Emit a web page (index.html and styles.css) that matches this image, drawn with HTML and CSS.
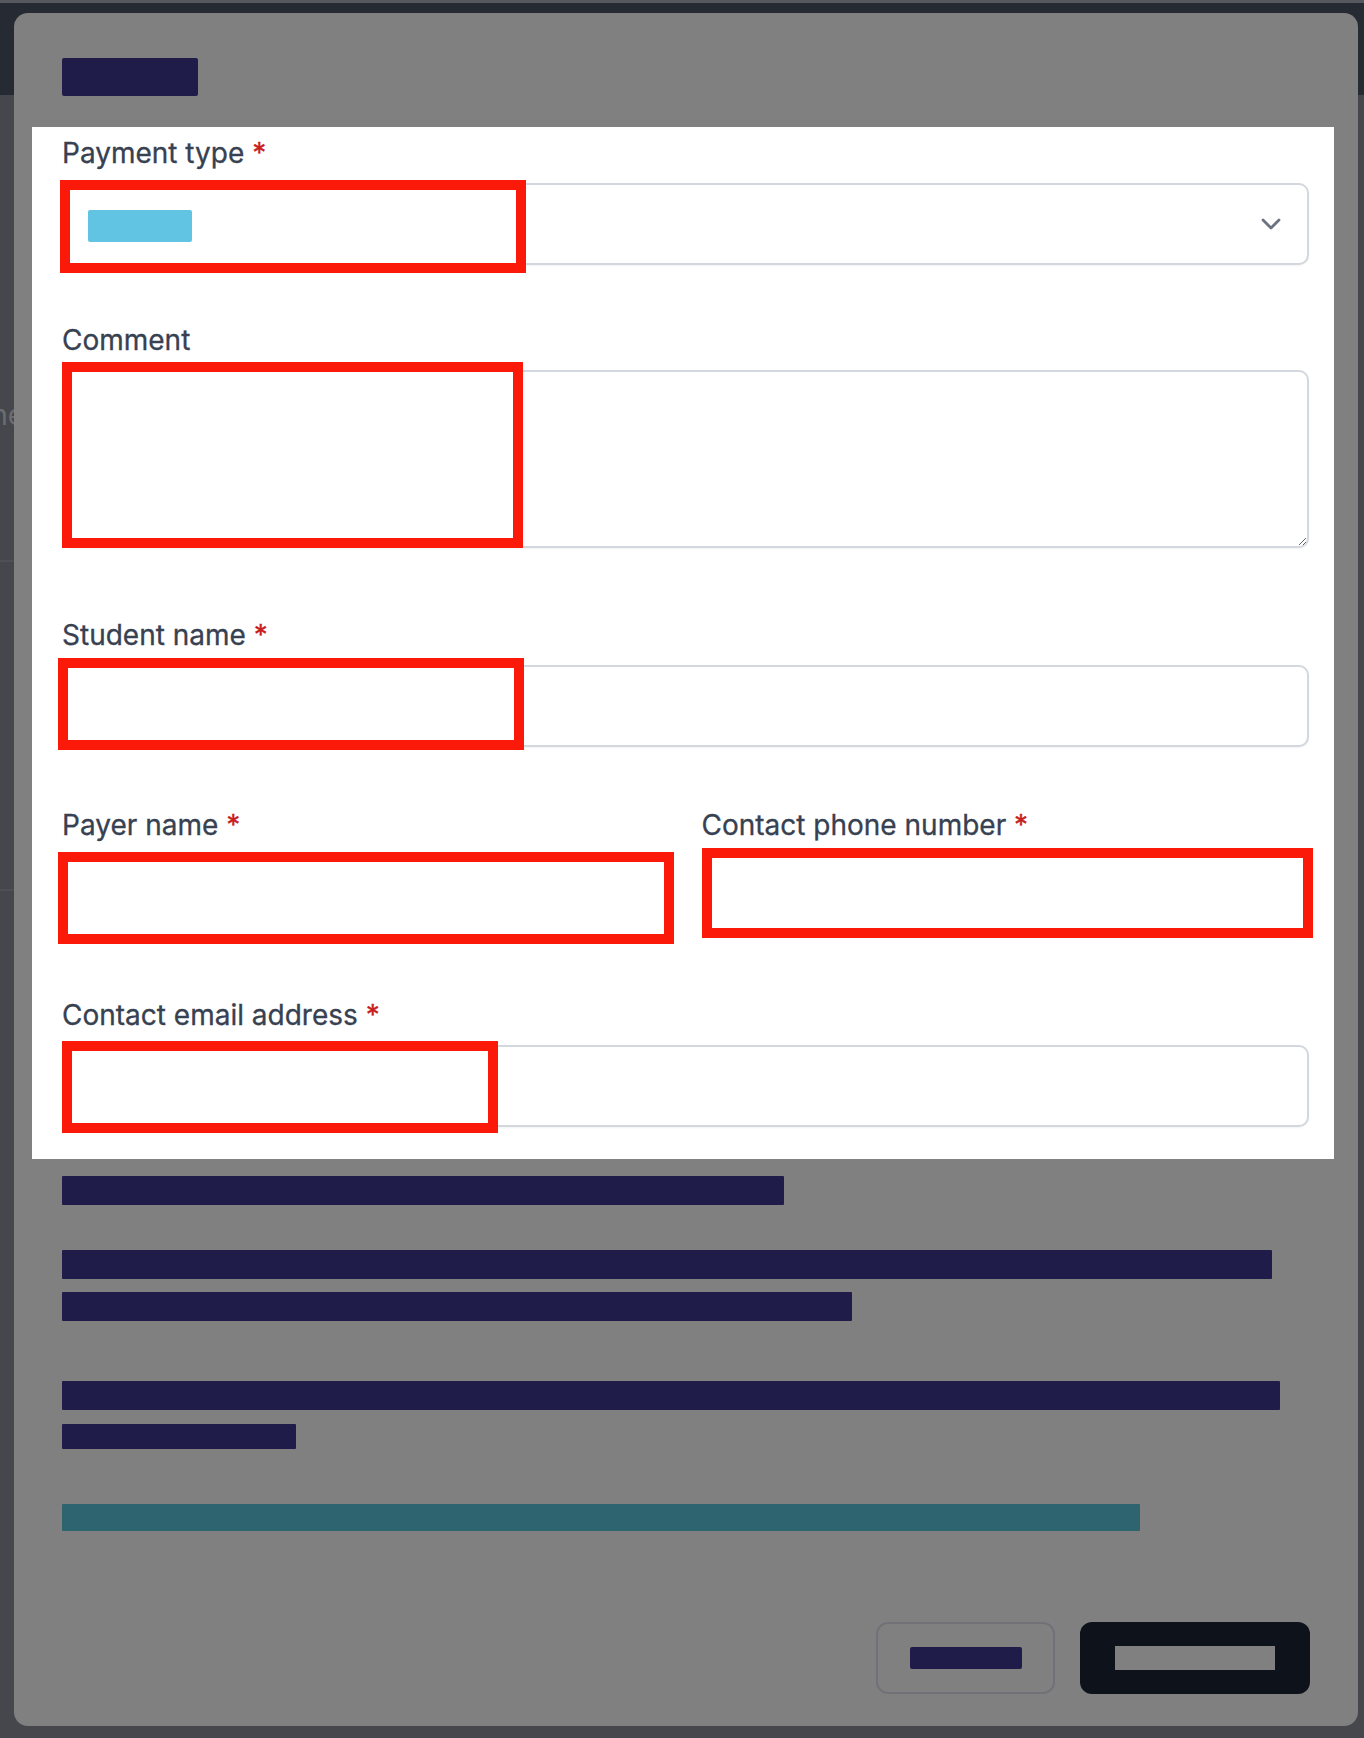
FILE: index.html
```html
<!DOCTYPE html>
<html lang="en">
<head>
<meta charset="utf-8">
<title>Payment form</title>
<link rel="stylesheet" href="styles.css">
</head>
<body>
<div class="page">
  <header class="app-header"></header>
  <main class="app-content">
    <div class="behind-text">Phone</div>
    <div class="behind-line line-a"></div>
    <div class="behind-line line-b"></div>
  </main>
</div>

<div class="modal">
  <div class="modal-head">
    <div class="redact title-bar"></div>
  </div>

  <form class="panel">
    <div class="field field-select">
      <label class="label">Payment type <span class="req">*</span></label>
      <div class="control select">
        <div class="select-value"></div>
        <svg class="chevron" viewBox="0 0 20 12" width="20" height="12"><path d="M2 2 L10 10 L18 2" fill="none" stroke="#6b7280" stroke-width="2.8" stroke-linecap="round" stroke-linejoin="round"/></svg>
        <div class="mark mark-payment"></div>
      </div>
    </div>

    <div class="field field-comment">
      <label class="label">Comment</label>
      <div class="control-wrap">
        <textarea class="control textarea"></textarea>
        <div class="mark mark-comment"></div>
      </div>
    </div>

    <div class="field field-student">
      <label class="label">Student name <span class="req">*</span></label>
      <div class="control-wrap">
        <input class="control input" type="text">
        <div class="mark mark-student"></div>
      </div>
    </div>

    <div class="field-row">
      <div class="field">
        <label class="label">Payer name <span class="req">*</span></label>
        <div class="control-wrap">
          <input class="control input" type="text">
          <div class="mark mark-payer"></div>
        </div>
      </div>
      <div class="field">
        <label class="label">Contact phone number <span class="req">*</span></label>
        <div class="control-wrap">
          <input class="control input" type="text">
          <div class="mark mark-phone"></div>
        </div>
      </div>
    </div>

    <div class="field field-email">
      <label class="label">Contact email address <span class="req">*</span></label>
      <div class="control-wrap">
        <input class="control input" type="email">
        <div class="mark mark-email"></div>
      </div>
    </div>
  </form>

  <div class="notes">
    <div class="redact bar bar-1"></div>
    <div class="redact bar bar-2"></div>
    <div class="redact bar bar-3"></div>
    <div class="redact bar bar-4"></div>
    <div class="redact bar bar-5"></div>
    <div class="bar bar-link"></div>
  </div>

  <div class="modal-foot">
    <button class="btn btn-cancel" type="button"><span class="redact btn-text-cancel"></span></button>
    <button class="btn btn-submit" type="button"><span class="btn-text-submit"></span></button>
  </div>
</div>
</body>
</html>
```

FILE: styles.css
```css
* { box-sizing: border-box; }

html, body {
  margin: 0;
  padding: 0;
}

body {
  width: 1364px;
  height: 1738px;
  overflow: hidden;
  background: #404249;
  font-family: Inter, "Noto Sans", "Liberation Sans", sans-serif;
  position: relative;
}

.page {
  height: 100%;
  display: flex;
  flex-direction: column;
}

.app-header {
  height: 95px;
  background: #262a33;
  border-top: 3px solid #55585e;
}

.app-content {
  flex: 1;
  background: #45474c;
  position: relative;
}

.behind-text {
  margin-left: -60px;
  margin-top: 300px;
  font-size: 28px;
  color: #6a6d72;
  line-height: 40px;
}

.behind-line {
  height: 2px;
  background: #4e5055;
  width: 40px;
}
.line-a { margin-top: 125px; }
.line-b { margin-top: 327px; }

/* Modal overlaid on the page */
.modal {
  position: absolute;
  left: 14px;
  top: 13px;
  width: 1344px;
  height: 1713px;
  background: #7f807f;
  border-radius: 14px;
  display: flex;
  flex-direction: column;
}

.modal-head {
  padding: 45px 48px 31px;
}

.redact {
  background: #1f1c4a;
  border-radius: 2px;
}

.title-bar {
  width: 136px;
  height: 38px;
}

.panel {
  margin: 0 24px 0 18px;
  background: #ffffff;
  padding: 6px 25px 32px 30px;
}

.field {
  display: flex;
  flex-direction: column;
}

.label {
  font-size: 28px;
  line-height: 40px;
  font-weight: 400;
  color: #374151;
  margin-bottom: 10px;
  white-space: nowrap;
  -webkit-text-stroke: 0.3px #374151;
}

.req {
  color: #c81e1e;
  -webkit-text-stroke: 0.3px #c81e1e;
}

.control-wrap,
.select {
  position: relative;
}

.control {
  display: block;
  width: 100%;
  border: 2px solid #d3d7de;
  border-radius: 10px;
  background: #fff;
  box-shadow: 0 1px 2px rgba(0, 0, 0, 0.05);
  font-family: inherit;
  font-size: 26px;
  margin: 0;
  outline: none;
}

.select {
  height: 82px;
  display: flex;
  align-items: center;
  padding: 0 24px;
}

.select-value {
  width: 104px;
  height: 32px;
  background: #62c4e3;
  border-radius: 2px;
  margin-top: 4px;
}

.chevron {
  margin-left: auto;
  margin-top: 0;
  margin-right: 2px;
}

.input {
  height: 82px;
  padding: 0 20px;
}

.textarea {
  height: 178px;
  resize: vertical;
  padding: 16px 20px;
}

.field-select { margin-bottom: 55px; }
.field-comment { margin-bottom: 67px; }
.field-student { margin-bottom: 58px; }
.field-row {
  display: grid;
  grid-template-columns: 1fr 1fr;
  column-gap: 32px;
  margin-bottom: 58px;
}

/* red annotation boxes drawn over the controls */
.mark {
  position: absolute;
  border: 10px solid #fb1a0a;
  pointer-events: none;
}
.mark-payment { left: -4px; top: -5px; width: 466px; height: 93px; }
.mark-comment { left: 0; top: -8px; width: 461px; height: 186px; }
.mark-student { left: -4px; top: -7px; width: 466px; height: 92px; }
.mark-payer { left: -4px; top: -3px; width: 616px; height: 92px; }
.mark-phone { left: 0; top: -7px; width: 611px; height: 90px; }
.mark-email { left: 0; top: -4px; width: 436px; height: 92px; }

.notes {
  padding: 17px 48px 0;
  display: flex;
  flex-direction: column;
}

.bar { height: 29px; border-radius: 1px; }
.bar-1 { width: 722px; }
.bar-2 { width: 1210px; margin-top: 45px; }
.bar-3 { width: 790px; margin-top: 13px; }
.bar-4 { width: 1218px; margin-top: 60px; }
.bar-5 { width: 234px; height: 25px; margin-top: 14px; }
.bar-link { width: 1078px; height: 27px; margin-top: 55px; background: #2e6470; }

.modal-foot {
  margin-top: auto;
  padding: 0 48px 32px;
  display: flex;
  justify-content: flex-end;
  gap: 25px;
}

.btn {
  height: 72px;
  border-radius: 12px;
  display: flex;
  align-items: center;
  justify-content: center;
  padding: 0;
  font-family: inherit;
}

.btn-cancel {
  width: 179px;
  background: #808080;
  border: 2px solid #717178;
}

.btn-text-cancel {
  display: block;
  width: 112px;
  height: 22px;
}

.btn-submit {
  width: 230px;
  background: #0e121a;
  border: none;
}

.btn-text-submit {
  display: block;
  width: 160px;
  height: 24px;
  background: #808080;
}
```
